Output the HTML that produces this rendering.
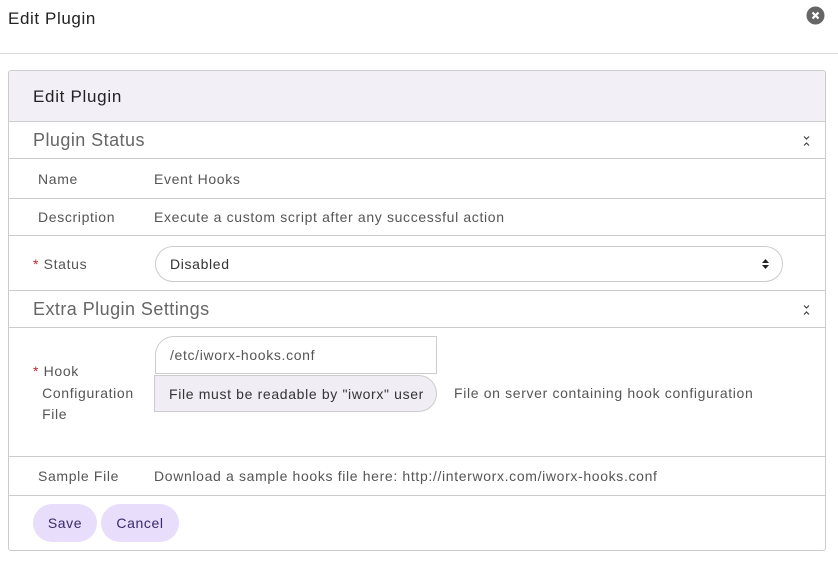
<!DOCTYPE html>
<html><head><style>
*{box-sizing:border-box;margin:0;padding:0}
body{width:838px;height:562px;background:#fff;font-family:"Liberation Sans",sans-serif;position:relative;overflow:hidden;color:#555}
.a{position:absolute}
.hl{position:absolute;left:9px;right:12px;height:1px;background:#ccc}
.t{position:absolute;font-size:14px;color:#555;letter-spacing:0.65px;white-space:nowrap}
.sec{position:absolute;left:33px;font-size:18px;color:#666;letter-spacing:0.45px}
.req{color:#c0272d}
</style></head><body>
<div class="a" style="left:8px;top:9px;font-size:17px;color:#222;letter-spacing:0.6px">Edit Plugin</div>
<svg class="a" style="left:806px;top:6px" width="19" height="19" viewBox="0 0 19 19"><circle cx="9.5" cy="9.5" r="9" fill="#666"/><path d="M6.5 6.5L12.5 12.5M12.5 6.5L6.5 12.5" stroke="#fff" stroke-width="2.2"/></svg>
<div class="a" style="left:0;right:0;top:53px;height:1px;background:#ddd"></div>
<div class="a" style="left:8px;top:70px;width:818px;height:481px;border:1px solid #ccc;border-radius:3px"></div>
<div class="a" style="left:9px;top:71px;width:816px;height:50px;background:#f3eff7;border-radius:3px 3px 0 0"></div>
<div class="a" style="left:33px;top:87px;font-size:17px;color:#222;letter-spacing:0.7px">Edit Plugin</div>
<div class="hl" style="top:121px"></div>
<div class="sec" style="top:130px">Plugin Status</div>
<svg class="a" style="left:802px;top:135px" width="9" height="12" viewBox="0 0 9 12"><path d="M2 1.5L4.5 4L7 1.5M2 10.5L4.5 8L7 10.5" stroke="#444" stroke-width="1.2" fill="none"/></svg>
<div class="hl" style="top:158px"></div>
<div class="t" style="left:38px;top:171px">Name</div>
<div class="t" style="left:154px;top:171px">Event Hooks</div>
<div class="hl" style="top:198px"></div>
<div class="t" style="left:38px;top:209px">Description</div>
<div class="t" style="left:154px;top:209px">Execute a custom script after any successful action</div>
<div class="hl" style="top:235px"></div>
<div class="t" style="left:33px;top:256px"><span class="req">*</span> Status</div>
<div class="a" style="left:155px;top:246px;width:628px;height:36px;border:1px solid #ccc;border-radius:18px"></div>
<div class="t" style="left:170px;top:256px;color:#333">Disabled</div>
<svg class="a" style="left:761px;top:258px" width="9" height="12" viewBox="0 0 9 12"><path d="M1 5L4.5 1L8 5ZM1 7L4.5 11L8 7Z" fill="#222"/></svg>
<div class="hl" style="top:290px"></div>
<div class="sec" style="top:299px">Extra Plugin Settings</div>
<svg class="a" style="left:802px;top:304px" width="9" height="12" viewBox="0 0 9 12"><path d="M2 1.5L4.5 4L7 1.5M2 10.5L4.5 8L7 10.5" stroke="#444" stroke-width="1.2" fill="none"/></svg>
<div class="hl" style="top:327px"></div>
<div class="t" style="left:33px;top:361px;line-height:21.5px"><span class="req">*</span> Hook<br>&nbsp; Configuration<br>&nbsp; File</div>
<div class="a" style="left:155px;top:336px;width:282px;height:38px;border:1px solid #ccc;border-radius:19px 0 0 0"></div>
<div class="t" style="left:170px;top:347px">/etc/iworx-hooks.conf</div>
<div class="a" style="left:154px;top:375px;width:283px;height:37px;border:1px solid #ccc;border-radius:0 19px 19px 0;background:#f1edf5"></div>
<div class="t" style="left:169px;top:386px;color:#333">File must be readable by "iworx" user</div>
<div class="t" style="left:454px;top:385px">File on server containing hook configuration</div>
<div class="hl" style="top:456px"></div>
<div class="t" style="left:38px;top:468px">Sample File</div>
<div class="t" style="left:154px;top:468px">Download a sample hooks file here: http://interworx.com/iworx-hooks.conf</div>
<div class="hl" style="top:495px"></div>
<div class="a" style="left:33px;top:504px;width:64px;height:38px;border-radius:19px;background:#e8ddfb;color:#3a2a6a;font-size:14px;line-height:38px;text-align:center;letter-spacing:0.6px">Save</div>
<div class="a" style="left:101px;top:504px;width:78px;height:38px;border-radius:19px;background:#e8ddfb;color:#3a2a6a;font-size:14px;line-height:38px;text-align:center;letter-spacing:0.6px">Cancel</div>
</body></html>
